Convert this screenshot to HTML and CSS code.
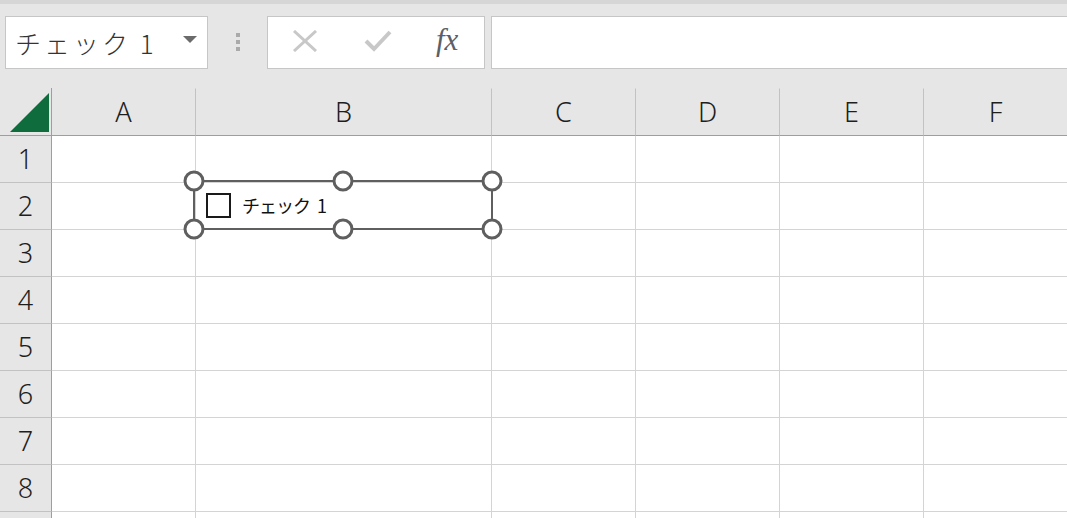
FILE: index.html
```html
<!DOCTYPE html>
<html>
    <head>
        <meta charset="utf-8">
        <title>Book1 - Excel</title>
        <link rel="stylesheet" href="styles.css">
    </head>
    <body>
        <div class="topband"></div>
        <div class="toolbar">
            <div class="namebox">
                <span class="name">チェック 1</span>
                <span class="drop"></span>
            </div>
            <div class="grip">
                <i></i><i></i><i></i>
            </div>
            <div class="fbtns">
                <svg class="ic" width="26" height="22" viewBox="0 0 26 22">
                    <path d="M2 1 L24 21 M24 1 L2 21" stroke="#c8c8c8" stroke-width="3" fill="none"/>
                </svg>
                <svg class="ic" width="28" height="22" viewBox="0 0 28 22">
                    <path d="M2 11 L10 19 L26 2" stroke="#c8c8c8" stroke-width="4" fill="none"/>
                </svg>
                <span class="fx">fx</span>
            </div>
            <div class="formula"></div>
        </div>

        <div class="sheet">
            <div class="corner"><span class="tri"></span></div>
            <div class="colhead">A</div>
            <div class="colhead">B</div>
            <div class="colhead">C</div>
            <div class="colhead">D</div>
            <div class="colhead">E</div>
            <div class="colhead last">F</div>

            <div class="rowhead">1</div><div class="cell"></div><div class="cell"></div><div class="cell"></div><div class="cell"></div><div class="cell"></div><div class="cell last"></div>
            <div class="rowhead">2</div><div class="cell"></div><div class="cell"></div><div class="cell"></div><div class="cell"></div><div class="cell"></div><div class="cell last"></div>
            <div class="rowhead">3</div><div class="cell"></div><div class="cell"></div><div class="cell"></div><div class="cell"></div><div class="cell"></div><div class="cell last"></div>
            <div class="rowhead">4</div><div class="cell"></div><div class="cell"></div><div class="cell"></div><div class="cell"></div><div class="cell"></div><div class="cell last"></div>
            <div class="rowhead">5</div><div class="cell"></div><div class="cell"></div><div class="cell"></div><div class="cell"></div><div class="cell"></div><div class="cell last"></div>
            <div class="rowhead">6</div><div class="cell"></div><div class="cell"></div><div class="cell"></div><div class="cell"></div><div class="cell"></div><div class="cell last"></div>
            <div class="rowhead">7</div><div class="cell"></div><div class="cell"></div><div class="cell"></div><div class="cell"></div><div class="cell"></div><div class="cell last"></div>
            <div class="rowhead">8</div><div class="cell"></div><div class="cell"></div><div class="cell"></div><div class="cell"></div><div class="cell"></div><div class="cell last"></div>
            <!-- row 9 only peeks in at the bottom edge -->
            <div class="rowhead"></div><div class="cell"></div><div class="cell"></div><div class="cell"></div><div class="cell"></div><div class="cell"></div><div class="cell last"></div>

            <!-- form control: check box, selected -->
            <div class="ctl">
                <span class="box"></span>
                <span class="label">チェック<span class="num">1</span></span>
                <span class="h tl"></span><span class="h tm"></span><span class="h tr"></span>
                <span class="h bl"></span><span class="h bm"></span><span class="h br"></span>
            </div>
        </div>
    </body>
</html>
```

FILE: styles.css
```css
* {
    box-sizing: border-box;
}
body {
    margin: 0;
    width: 1067px;
    height: 518px;
    overflow: hidden;
    background: #e6e6e6;
    font-family: "Noto Sans CJK JP", "Noto Sans", sans-serif;
}
.topband {
    height: 4px;
    background: #d6d6d6;
}
.toolbar {
    height: 84px;
    padding-top: 12px;
    padding-left: 5px;
    display: flex;
    align-items: flex-start;
}
.namebox {
    width: 203px;
    height: 53px;
    background: white;
    border: 1px solid #c6c6c6;
    display: flex;
    align-items: center;
    padding-left: 9px;
}
.name {
    font-size: 26px;
    font-weight: 300;
    letter-spacing: 3px;
    color: #333;
    flex: 1;
}
.drop {
    width: 0;
    height: 0;
    border-left: 7px solid transparent;
    border-right: 7px solid transparent;
    border-top: 7px solid #6b6b6b;
    margin-right: 10px;
    margin-top: -6px;
}
.grip {
    width: 59px;
    height: 53px;
    display: flex;
    flex-direction: column;
    align-items: center;
    justify-content: center;
    gap: 3px;
    padding-left: 1px;
    padding-bottom: 2px;
}
.grip i {
    width: 4px;
    height: 4px;
    background: #aaaaaa;
}
.fbtns {
    width: 218px;
    height: 53px;
    background: white;
    border: 1px solid #c6c6c6;
    display: flex;
    align-items: center;
    padding-left: 24px;
}
.ic {
    margin-right: 46px;
    margin-top: -4px;
}
.ic + .ic {
    margin-right: 44px;
}
.fx {
    font-family: "Liberation Serif", serif;
    font-style: italic;
    font-size: 31px;
    color: #5b6068;
    margin-top: -6px;
}
.formula {
    flex: 1;
    height: 53px;
    margin-left: 6px;
    margin-right: -2px;
    background: white;
    border: 1px solid #c6c6c6;
}

.sheet {
    position: relative;
    display: grid;
    grid-template-columns: 52px 144px 296px 144px 144px 144px 1fr;
    grid-template-rows: 48px repeat(9, 47px);
    background: white;
}
.corner,
.colhead,
.rowhead {
    background: #e6e6e6;
    color: #1e1e1e;
    font-family: "Noto Sans", sans-serif;
    font-weight: 300;
    font-size: 27px;
    display: flex;
    align-items: center;
    justify-content: center;
}
.corner {
    border-right: 1px solid #9e9e9e;
    border-bottom: 1px solid #9e9e9e;
    position: relative;
}
.tri {
    position: absolute;
    left: 10px;
    top: 5px;
    width: 39px;
    height: 39px;
    background: #0f6c3c;
    clip-path: polygon(100% 0, 100% 100%, 0 100%);
}
.colhead {
    border-bottom: 1px solid #9e9e9e;
    border-right: 1px solid #c2c2c2;
    border-top: 1px solid #e6e6e6;
    padding-bottom: 2px;
}
.colhead.last {
    border-right: none;
}
.rowhead {
    border-right: 1px solid #9e9e9e;
    border-bottom: 1px solid #c2c2c2;
    padding-bottom: 2px;
}
.cell {
    border-right: 1px solid #d4d4d4;
    border-bottom: 1px solid #d4d4d4;
}
.cell.last {
    border-right: none;
}

.ctl {
    position: absolute;
    left: 193px;
    top: 92px;
    width: 300px;
    height: 50px;
    border: 2px solid #5f5f5f;
    display: flex;
    align-items: center;
    padding-left: 11px;
}
.box {
    width: 25px;
    height: 25px;
    border: 2px solid #1a1a1a;
    background: white;
}
.label {
    margin-left: 11px;
    font-size: 18px;
    color: #111;
    letter-spacing: -1px;
}
.num {
    margin-left: 7px;
    letter-spacing: 0;
}
.h {
    position: absolute;
    width: 21px;
    height: 21px;
    border: 3px solid #5f5f5f;
    border-radius: 50%;
    background: white;
    transform: translate(-50%, -50%);
}
.tl, .tm, .tr {
    top: -1px;
}
.bl, .bm, .br {
    top: calc(100% + 1px);
}
.tl, .bl {
    left: -1px;
}
.tm, .bm {
    left: 50%;
}
.tr, .br {
    left: calc(100% + 1px);
}
```
